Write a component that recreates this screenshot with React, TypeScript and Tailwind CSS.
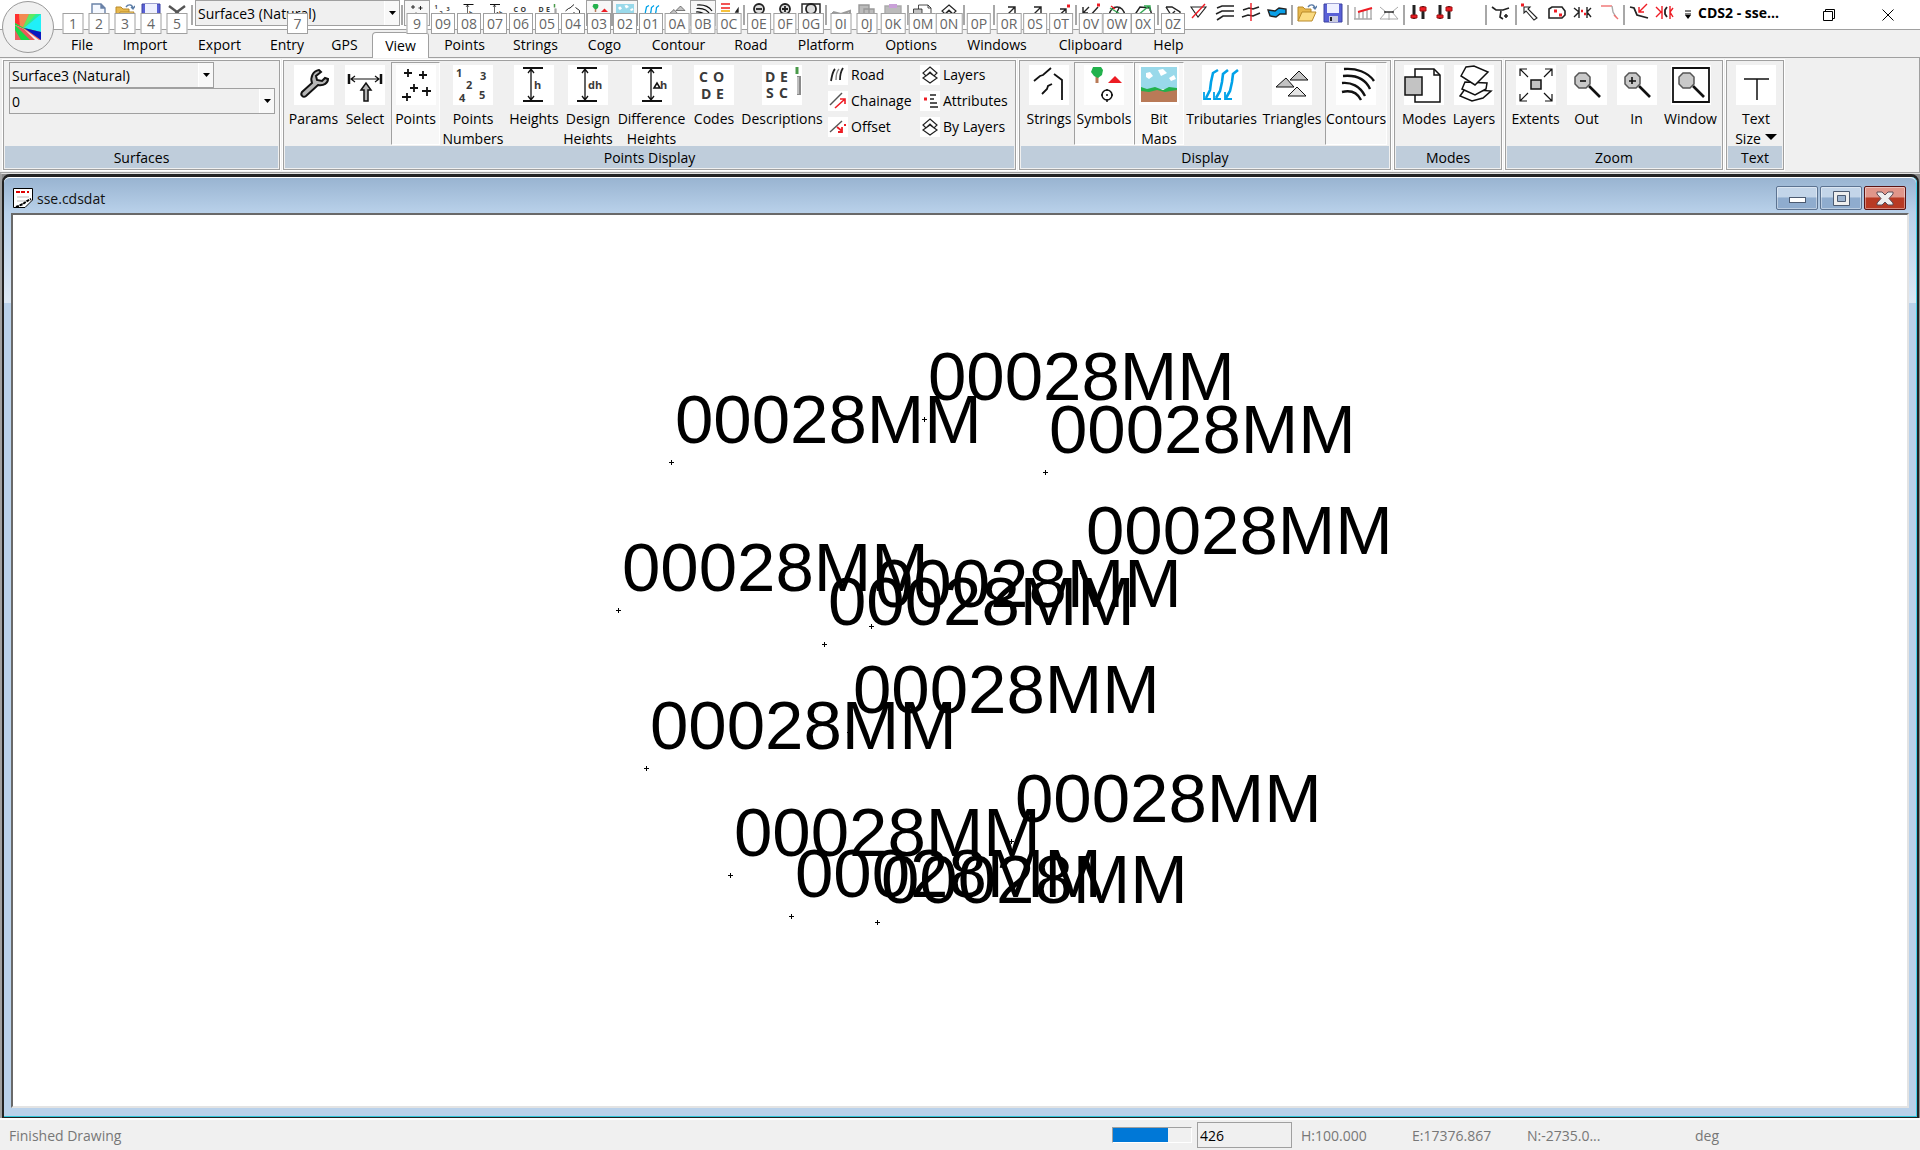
import React from 'react';

type IconProps = { className?: string };
type IconType = (props: IconProps) => React.ReactElement;

interface QuickItem {
  tip?: string;
  label: string;
  width: string;
  icon?: IconType;
  checked?: boolean;
}

interface Command {
  label: string;
  width: string;
  icon: IconType;
  checked?: boolean;
  menu?: boolean;
}

// 40 unit drawings, used by the large ribbon buttons and the quick access bar
function Svg40({ className, children }: { className?: string; children: React.ReactNode }) {
  return (
    <svg viewBox="0 0 40 40" className={className} fill="none" stroke="#111" strokeWidth="1.5" aria-hidden="true">
      {children}
    </svg>
  );
}

function Svg20({ className, children }: { className?: string; children: React.ReactNode }) {
  return (
    <svg viewBox="0 0 20 20" className={className} fill="none" stroke="#222" strokeWidth="1.4" aria-hidden="true">
      {children}
    </svg>
  );
}

function Glyph({ x, y, size = 11, children }: { x: number; y: number; size?: number; children: string }) {
  return (
    <text x={x} y={y} fontSize={size} fontWeight="700" fontFamily="Open Sans, sans-serif" fill="#3a3a3a" stroke="none">
      {children}
    </text>
  );
}

const WrenchIcon: IconType = ({ className }) => (
  <Svg40 className={className}>
    <path
      d="M8 27L18 18C16 12 19 6 25 5L27 7L22 11L23 15L28 16L31 13L34 14C34 18 30 21 24 20L12 31C9 33 6 30 8 27Z"
      fill="#b5b5b5"
      strokeWidth="2"
    />
  </Svg40>
);

const SelectIcon: IconType = ({ className }) => (
  <Svg40 className={className}>
    <path d="M4 9V19M36 9V19" strokeWidth="2.5" />
    <path d="M6 14H34M10 11L6 14L10 17M30 11L34 14L30 17" strokeWidth="1.2" />
    <path d="M16 25L21 18L26 25H23V36H19V25Z" fill="#b5b5b5" />
  </Svg40>
);

const PointsIcon: IconType = ({ className }) => (
  <Svg40 className={className}>
    <path d="M8 8H16M12 4V12M23 10H31M27 6V14M14 23H22M18 19V27M26 26H35M31 22V31M6 32H15M11 28V36" strokeWidth="1.8" />
  </Svg40>
);

const NumbersIcon: IconType = ({ className }) => (
  <Svg40 className={className}>
    <Glyph x={3} y={12}>1</Glyph>
    <Glyph x={27} y={15}>3</Glyph>
    <Glyph x={13} y={24}>2</Glyph>
    <Glyph x={6} y={37}>4</Glyph>
    <Glyph x={26} y={34}>5</Glyph>
  </Svg40>
);

function heightIcon(text: string): IconType {
  return ({ className }) => (
    <Svg40 className={className}>
      <path d="M9 3H29M9 36H29" strokeWidth="2" />
      <path d="M17 4V35M14 8L17 4L20 8M14 31L17 35L20 31" strokeWidth="1.3" />
      <Glyph x={20} y={24}>{text}</Glyph>
    </Svg40>
  );
}

const HeightsIcon = heightIcon('h');
const DesignHeightsIcon = heightIcon('dh');

const DifferenceIcon: IconType = ({ className }) => (
  <Svg40 className={className}>
    <path d="M10 3H30M10 36H30" strokeWidth="2" />
    <path d="M19 4V35M16 8L19 4L22 8M16 31L19 35L22 31" strokeWidth="1.3" />
    <path d="M22 23L25 18L28 23Z" />
    <Glyph x={28} y={24}>h</Glyph>
  </Svg40>
);

const CodesIcon: IconType = ({ className }) => (
  <Svg40 className={className}>
    <Glyph x={5} y={17} size={14}>C</Glyph>
    <Glyph x={19} y={17} size={14}>O</Glyph>
    <Glyph x={7} y={34} size={14}>D</Glyph>
    <Glyph x={22} y={34} size={14}>E</Glyph>
  </Svg40>
);

const DescriptionsIcon: IconType = ({ className }) => (
  <Svg40 className={className}>
    <Glyph x={3} y={17} size={14}>D</Glyph>
    <Glyph x={18} y={17} size={14}>E</Glyph>
    <Glyph x={4} y={33} size={14}>S</Glyph>
    <Glyph x={17} y={33} size={14}>C</Glyph>
    <path d="M35 2V9" stroke="#4a9a4a" strokeWidth="3" />
    <path d="M37 11V30" stroke="#8a8a8a" strokeWidth="4" />
    <path d="M36 12V29" stroke="#d0d0d0" />
  </Svg40>
);

const StringsIcon: IconType = ({ className }) => (
  <Svg40 className={className}>
    <path d="M5 16L11 11L14 10L22 3M25 9L33 15V35M13 29L18 24L19 21L23 19" strokeWidth="1.8" />
  </Svg40>
);

const SymbolsIcon: IconType = ({ className }) => (
  <Svg40 className={className}>
    <path d="M13 10V18" stroke="#b97a57" strokeWidth="3" />
    <path d="M9 2H17L19 5L18 10L14 13L10 11L7 7Z" fill="#22b14c" stroke="none" />
    <path d="M24 18L31 11L38 18Z" fill="#ed1c24" stroke="none" />
    <circle cx="23" cy="30" r="5" />
    <path d="M22 30H24M23 24V26M23 34V37M17 30H19M27 30H29" />
  </Svg40>
);

const BitMapsIcon: IconType = ({ className }) => (
  <Svg40 className={className}>
    <g stroke="none">
      <path d="M2 2H38V24H2Z" fill="#99d9ea" />
      <path d="M7 8L11 7L14 11L10 14L7 12ZM19 5L24 4L28 8L22 11ZM30 13L35 10L37 14L32 16Z" fill="#fff" />
      <path d="M2 22L8 24L16 22L24 25L30 22L38 23V28H2Z" fill="#22b14c" />
      <path d="M2 26L10 27L18 25L26 27L38 25V37H2Z" fill="#b97a57" />
    </g>
  </Svg40>
);

const TributariesIcon: IconType = ({ className }) => (
  <Svg40 className={className}>
    <g stroke="#00a2e8" strokeWidth="2.6">
      <path d="M16 5L11 8L9 17L8 25L4 33M26 5L21 9L20 17L18 26L14 33M36 5L31 9L30 17L28 26L24 33" />
      <path d="M2 27V34H9M12 27V34H19M23 27V34H30" strokeWidth="1.8" />
    </g>
  </Svg40>
);

const TrianglesIcon: IconType = ({ className }) => (
  <Svg40 className={className}>
    <g fill="#c3c3c3" strokeWidth="1">
      <path d="M18 15L27 6L36 15Z" />
      <path d="M4 22L14 13L22 22Z" />
      <path d="M16 31L25 22L34 31Z" fill="#e4e4e4" />
    </g>
  </Svg40>
);

const ContoursIcon: IconType = ({ className }) => (
  <Svg40 className={className}>
    <path
      d="M8 4C20 3 32 7 38 16M7 11C18 10 29 13 34 24M6 18C15 17 24 21 29 31M6 27C14 25 21 27 25 35"
      strokeWidth="2.4"
    />
  </Svg40>
);

const ModesIcon: IconType = ({ className }) => (
  <Svg40 className={className}>
    <path d="M11 4H30L36 10V37H11Z" fill="#fff" />
    <path d="M30 4V10H36" />
    <path d="M1 12H18V30H1Z" fill="#c3c3c3" />
  </Svg40>
);

const SheetsIcon: IconType = ({ className }) => (
  <Svg40 className={className}>
    <g fill="#fff">
      <path d="M6 31L11 24L37 26L29 33L18 36Z" />
      <path d="M8 24L11 17L33 18L32 24L21 30Z" />
      <path d="M7 11L12 2L20 1L34 7L21 20Z" />
    </g>
  </Svg40>
);

const ExtentsIcon: IconType = ({ className }) => (
  <Svg40 className={className}>
    <path d="M15 15H25V24H15Z" fill="#c3c3c3" />
    <path d="M12 12L4 4M4 11V4H11M28 12L36 4M29 4H36V11M12 28L4 36M4 29V36H11M28 28L36 36M36 29V36H29" strokeWidth="1.2" />
  </Svg40>
);

function zoomIcon(mark: string, framed: boolean): IconType {
  return ({ className }) => (
    <Svg40 className={className}>
      {framed && <path d="M2 3H38V37H2Z" strokeWidth="1.8" />}
      <path d="M22 21L33 32" strokeWidth="2.6" />
      <path d="M12 8H19L23 12V19L19 23H12L8 19V12Z" fill="#c9c9c9" stroke="#555" />
      <path d={mark} strokeWidth="1.6" />
    </Svg40>
  );
}

const ZoomOutIcon = zoomIcon('M13 16H19', false);
const ZoomInIcon = zoomIcon('M12 16H19M15 12V19', false);
const ZoomWindowIcon = zoomIcon('', true);

// The quick access bar draws the zoom commands as plain lenses
function lensIcon(mark: string, framed: boolean): IconType {
  return ({ className }) => (
    <Svg20 className={className}>
      {framed && <path d="M1 1H19V19H1Z" />}
      <circle cx="10" cy="6" r="5" fill="#ddd" strokeWidth="1.8" />
      <path d={mark} strokeWidth="1.8" />
    </Svg20>
  );
}

const LensOutIcon = lensIcon('M7 6H13', false);
const LensInIcon = lensIcon('M7 6H13M10 3V9', false);
const LensWindowIcon = lensIcon('', true);

const TextSizeIcon: IconType = ({ className }) => (
  <Svg40 className={className}>
    <path d="M8 14H33M21 14V35" />
  </Svg40>
);

// 20 unit drawings
const RoadIcon: IconType = ({ className }) => (
  <Svg20 className={className}>
    <path d="M3 16C4 10 5 6 7 4M12 15C12 9 13 6 15 3" strokeWidth="1.8" />
    <path d="M8 15C8 10 9 6 11 4" stroke="#888" />
  </Svg20>
);

const ChainageIcon: IconType = ({ className }) => (
  <Svg20 className={className}>
    <path d="M2 14L14 2" stroke="#555" />
    <path d="M7 17L17 8M12 8H17V13" stroke="#ee1c24" strokeWidth="1.6" />
  </Svg20>
);

const OffsetIcon: IconType = ({ className }) => (
  <Svg20 className={className}>
    <path d="M2 15L14 4" stroke="#555" />
    <path d="M9 10L14 14M10 15H14V10M16 8H18" stroke="#ee1c24" strokeWidth="1.8" />
  </Svg20>
);

const LayersIcon: IconType = ({ className }) => (
  <Svg20 className={className}>
    <path d="M10 2L17 8L14 11L10 7L6 11L3 8ZM10 8L17 13L10 18L3 13Z" strokeWidth="1.2" />
  </Svg20>
);

const AttributesIcon: IconType = ({ className }) => (
  <Svg20 className={className}>
    <path d="M4 8H7" stroke="#ee1c24" strokeWidth="3" />
    <path d="M10 4H16M10 8H14M10 12H17M10 16H18" strokeWidth="1.6" />
  </Svg20>
);

const NewIcon: IconType = ({ className }) => (
  <Svg20 className={className}>
    <path d="M3 1H12L16 5V20H3Z" fill="#f4f8ff" stroke="#6a82a8" />
    <path d="M12 1V5H16" fill="#6a82a8" stroke="#6a82a8" />
  </Svg20>
);

const OpenIcon: IconType = ({ className }) => (
  <Svg20 className={className}>
    <path d="M1 18V4H6L8 6H14V9" fill="#e7b84d" stroke="#b98a2b" strokeWidth="1" />
    <path d="M1 18L5 9H19L15 18Z" fill="#fbdc83" stroke="#b98a2b" strokeWidth="1" />
    <path d="M11 4C13 1 17 1 18 5M16 4L18 6L20 3" stroke="#5b7ca6" />
  </Svg20>
);

const SaveIcon: IconType = ({ className }) => (
  <Svg20 className={className}>
    <path d="M1 1H19V19H1Z" fill="#5960d6" stroke="#3c42a0" strokeWidth="1" />
    <path d="M4 1H16V10H4Z" fill="#eef0ff" stroke="none" />
    <path d="M6 13H15V19H6Z" fill="#c9cbe0" stroke="none" />
    <path d="M8 14V18" stroke="#222" strokeWidth="2" />
  </Svg20>
);

const CrossIcon: IconType = ({ className }) => (
  <Svg20 className={className}>
    <path d="M2 3L10 9L18 3M4 16L10 9L16 16" stroke="#555" strokeWidth="2.4" />
  </Svg20>
);

const ColourBandsIcon: IconType = ({ className }) => (
  <Svg20 className={className}>
    <path d="M2 1H11M2 5H11" stroke="#f25555" strokeWidth="2" />
    <path d="M2 8H11" stroke="#f6c13c" strokeWidth="2" />
    <path d="M2 11H11" stroke="#4cc356" strokeWidth="2" />
    <path d="M17 9L19 6V9Z" fill="#222" />
  </Svg20>
);

const GreyChartIcon: IconType = ({ className }) => (
  <Svg20 className={className}>
    <path d="M2 9V14M2 9L10 11L19 8V14" stroke="#999" strokeWidth="2" />
  </Svg20>
);

const CopyIcon: IconType = ({ className }) => (
  <Svg20 className={className}>
    <path d="M2 2H12V11H2ZM7 6H17V16H7Z" fill="#bbb" stroke="#999" />
  </Svg20>
);

const PasteIcon: IconType = ({ className }) => (
  <Svg20 className={className}>
    <path d="M2 3H18V18H2Z" fill="#bbb" stroke="#aaa" />
    <path d="M6 1H14V5H6Z" fill="#c9a0d8" stroke="none" />
  </Svg20>
);

const ArrowIcon: IconType = ({ className }) => (
  <Svg20 className={className}>
    <path d="M3 17L16 4M9 4H16V10" />
  </Svg20>
);

const ArrowDotIcon: IconType = ({ className }) => (
  <Svg20 className={className}>
    <path d="M3 17L15 6M9 6H15V11" />
    <path d="M16 3H19" stroke="#ee1c24" strokeWidth="3" />
  </Svg20>
);

const SplitIcon: IconType = ({ className }) => (
  <Svg20 className={className}>
    <path d="M2 4V10H7M2 10L8 4M8 14L17 4" />
    <path d="M16 2H19" stroke="#ee1c24" strokeWidth="3" />
  </Svg20>
);

const ArcIcon: IconType = ({ className }) => (
  <Svg20 className={className}>
    <path d="M2 13C3 1 17 1 18 13M8 13L12 5" />
    <path d="M3 5L15 12" stroke="#33a852" />
    <path d="M4 3L8 6" stroke="#ee1c24" />
  </Svg20>
);

const GreenArcIcon: IconType = ({ className }) => (
  <Svg20 className={className}>
    <path d="M1 13L7 4L17 5L19 13" />
    <path d="M5 12L16 3M11 3H17V8" stroke="#33a852" />
  </Svg20>
);

const FlagIcon: IconType = ({ className }) => (
  <Svg20 className={className}>
    <path d="M3 4H9L17 9V14M3 4L8 12L12 8" />
  </Svg20>
);

const StrikeIcon: IconType = ({ className }) => (
  <Svg20 className={className}>
    <path d="M2 4L17 4L9 14Z" strokeWidth="1.1" />
    <path d="M3 15L16 1" stroke="#ee1c24" />
  </Svg20>
);

const WavesIcon: IconType = ({ className }) => (
  <Svg20 className={className}>
    <path d="M2 5L7 3H19M1 11L7 8H19M2 17L8 13H19" strokeWidth="1.6" />
  </Svg20>
);

const CrossWavesIcon: IconType = ({ className }) => (
  <Svg20 className={className}>
    <path d="M2 7L8 5L12 6L18 4M1 14L7 12L12 13L19 10" strokeWidth="1.6" />
    <path d="M10 0V18" stroke="#ee1c24" />
  </Svg20>
);

const PondIcon: IconType = ({ className }) => (
  <Svg20 className={className}>
    <path d="M1 7L8 8L12 5L19 6V11L13 11L9 14L3 13Z" fill="#0aa0e8" />
  </Svg20>
);

const ProfileIcon: IconType = ({ className }) => (
  <Svg20 className={className}>
    <path d="M2 4V16M6 9V16M10 8V16M14 7V16M18 5V16M1 16H19" stroke="#aaa" />
    <path d="M5 9L12 7L19 5" stroke="#ee1c24" strokeWidth="2" />
  </Svg20>
);

const SectionIcon: IconType = ({ className }) => (
  <Svg20 className={className}>
    <path d="M1 4L7 9L1 16M19 4L13 9L19 16M10 9V17M1 16H19" stroke="#aaa" strokeWidth="1" />
    <path d="M5 9H15" />
  </Svg20>
);

const SliderIcon: IconType = ({ className }) => (
  <Svg20 className={className}>
    <path d="M5 2V16M14 3V16" strokeWidth="3" />
    <path d="M2 12H8V15H2ZM11 4H17V8H11Z" fill="#ee1c24" stroke="#a01010" strokeWidth="1" />
  </Svg20>
);

const BranchIcon: IconType = ({ className }) => (
  <Svg20 className={className}>
    <path d="M1 4L5 7H12L18 5M10 8L9 14L12 16M15 11V15M13 13H17" strokeWidth="1.6" />
  </Svg20>
);

const PickIcon: IconType = ({ className }) => (
  <Svg20 className={className}>
    <path d="M3 4L9 4L7 6L16 15L13 17L5 8L3 10Z" strokeWidth="1.1" />
    <path d="M0 2H3" stroke="#ee1c24" strokeWidth="3" />
  </Svg20>
);

const LoopIcon: IconType = ({ className }) => (
  <Svg20 className={className}>
    <path d="M2 15V6L5 4H15L18 8V12L15 15Z" strokeWidth="1.6" />
    <path d="M7 8H10M12 12H15" stroke="#ee1c24" strokeWidth="3" />
  </Svg20>
);

const JoinIcon: IconType = ({ className }) => (
  <Svg20 className={className}>
    <path d="M1 5L6 9L1 14M6 4V15M18 5L14 9L18 14M14 4V15" />
    <path d="M8 8H10M11 11H13" stroke="#ee1c24" strokeWidth="2.4" />
  </Svg20>
);

const CurveIcon: IconType = ({ className }) => (
  <Svg20 className={className}>
    <path d="M2 3H13" stroke="#f07070" />
    <path d="M13 3L14 9L17 14" stroke="#aaa" />
    <path d="M15 12L19 16" stroke="#f07070" />
  </Svg20>
);

const TrimIcon: IconType = ({ className }) => (
  <Svg20 className={className}>
    <path d="M1 4L5 5L8 12L19 15" strokeWidth="1.8" />
    <path d="M18 1L10 9M10 4V9H15" stroke="#ee1c24" />
  </Svg20>
);

const MirrorIcon: IconType = ({ className }) => (
  <Svg20 className={className}>
    <path d="M1 4L6 9L1 14M7 3V16M18 5L15 9L18 14M15 3V16" stroke="#ee1c24" />
    <path d="M12 4L10 7V11L12 14" strokeWidth="1.8" />
  </Svg20>
);

const quickFile: QuickItem[] = [
  { tip: '1', label: 'Application menu', width: 'w-[26px]' },
  { tip: '2', label: 'New', width: 'w-[26px]', icon: NewIcon },
  { tip: '3', label: 'Open', width: 'w-[26px]', icon: OpenIcon },
  { tip: '4', label: 'Save', width: 'w-[26px]', icon: SaveIcon },
  { tip: '5', label: 'Close', width: 'w-[26px]', icon: CrossIcon },
];

const quickGroups: QuickItem[][] = [
  [
    { tip: '9', label: 'Points', width: 'w-[26px]', icon: PointsIcon, checked: true },
    { tip: '09', label: 'Point numbers', width: 'w-[26px]', icon: NumbersIcon },
    { tip: '08', label: 'Heights', width: 'w-[26px]', icon: HeightsIcon },
    { tip: '07', label: 'Difference heights', width: 'w-[26px]', icon: DifferenceIcon },
    { tip: '06', label: 'Codes', width: 'w-[26px]', icon: CodesIcon },
    { tip: '05', label: 'Descriptions', width: 'w-[26px]', icon: DescriptionsIcon },
    { tip: '04', label: 'Strings', width: 'w-[26px]', icon: StringsIcon },
    { tip: '03', label: 'Symbols', width: 'w-[26px]', icon: SymbolsIcon, checked: true },
    { tip: '02', label: 'Bit maps', width: 'w-[26px]', icon: BitMapsIcon, checked: true },
    { tip: '01', label: 'Tributaries', width: 'w-[26px]', icon: TributariesIcon },
    { tip: '0A', label: 'Triangles', width: 'w-[26px]', icon: TrianglesIcon },
    { tip: '0B', label: 'Contours', width: 'w-[26px]', icon: ContoursIcon, checked: true },
    { tip: '0C', label: 'Colour bands', width: 'w-[26px]', icon: ColourBandsIcon },
  ],
  [
    { tip: '0E', label: 'Zoom out', width: 'w-[26px]', icon: LensOutIcon },
    { tip: '0F', label: 'Zoom in', width: 'w-[26px]', icon: LensInIcon },
    { tip: '0G', label: 'Zoom window', width: 'w-[26px]', icon: LensWindowIcon },
  ],
  [
    { tip: '0I', label: 'Cut', width: 'w-[26px]', icon: GreyChartIcon },
    { tip: '0J', label: 'Copy', width: 'w-[26px]', icon: CopyIcon },
    { tip: '0K', label: 'Paste', width: 'w-[26px]', icon: PasteIcon },
  ],
  [
    { tip: '0M', label: 'Modes', width: 'w-[26px]', icon: ModesIcon },
    { tip: '0N', label: 'Layers', width: 'w-[26px]', icon: LayersIcon },
  ],
  [{ tip: '0P', label: 'Text', width: 'w-[26px]' }],
  [
    { tip: '0R', label: 'Line', width: 'w-[26px]', icon: ArrowIcon },
    { tip: '0S', label: 'Line by points', width: 'w-[26px]', icon: ArrowIcon },
    { tip: '0T', label: 'Line to point', width: 'w-[26px]', icon: ArrowDotIcon },
  ],
  [
    { tip: '0V', label: 'Split', width: 'w-[26px]', icon: SplitIcon },
    { tip: '0W', label: 'Arc', width: 'w-[26px]', icon: ArcIcon },
    { tip: '0X', label: 'Arc by points', width: 'w-[26px]', icon: GreenArcIcon },
  ],
  [
    { tip: '0Z', label: 'Polygon', width: 'w-[26px]', icon: FlagIcon },
    { label: 'Delete triangle', width: 'w-[26px]', icon: StrikeIcon },
    { label: 'Make contours', width: 'w-[26px]', icon: WavesIcon },
    { label: 'Break line', width: 'w-[26px]', icon: CrossWavesIcon },
    { label: 'Flood', width: 'w-[26px]', icon: PondIcon },
  ],
  [
    { label: 'Open road', width: 'w-[26px]', icon: OpenIcon },
    { label: 'Save road', width: 'w-[26px]', icon: SaveIcon },
  ],
  [
    { label: 'Long section', width: 'w-[26px]', icon: ProfileIcon },
    { label: 'Cross section', width: 'w-[26px]', icon: SectionIcon },
  ],
  [
    { label: 'Levels down', width: 'w-[26px]', icon: SliderIcon },
    { label: 'Levels up', width: 'w-[26px]', icon: SliderIcon },
    { label: 'Spare', width: 'w-[26px]' },
  ],
  [{ label: 'Branch', width: 'w-[26px]', icon: BranchIcon }],
  [
    { label: 'Pick', width: 'w-[26px]', icon: PickIcon },
    { label: 'Loop', width: 'w-[26px]', icon: LoopIcon },
    { label: 'Join', width: 'w-[26px]', icon: JoinIcon },
    { label: 'Curve', width: 'w-[26px]', icon: CurveIcon },
  ],
  [
    { label: 'Trim', width: 'w-[26px]', icon: TrimIcon },
    { label: 'Mirror', width: 'w-[26px]', icon: MirrorIcon },
  ],
];

const tabs = [
  { label: 'File', width: 'w-[52px]' },
  { label: 'Import', width: 'w-[74px]' },
  { label: 'Export', width: 'w-[75px]' },
  { label: 'Entry', width: 'w-[60px]' },
  { label: 'GPS', width: 'w-[55px]' },
  { label: 'View', width: 'w-[57px]' },
  { label: 'Points', width: 'w-[71px]' },
  { label: 'Strings', width: 'w-[71px]' },
  { label: 'Cogo', width: 'w-[67px]' },
  { label: 'Contour', width: 'w-[81px]' },
  { label: 'Road', width: 'w-[64px]' },
  { label: 'Platform', width: 'w-[86px]' },
  { label: 'Options', width: 'w-[84px]' },
  { label: 'Windows', width: 'w-[88px]' },
  { label: 'Clipboard', width: 'w-[99px]' },
  { label: 'Help', width: 'w-[57px]' },
];

const pointCommands: Command[] = [
  { label: 'Params', width: 'w-[51px]', icon: WrenchIcon },
  { label: 'Select', width: 'w-[52px]', icon: SelectIcon },
  { label: 'Points', width: 'w-[49px]', icon: PointsIcon, checked: true },
  { label: 'Points Numbers', width: 'w-[66px]', icon: NumbersIcon },
  { label: 'Heights', width: 'w-[56px]', icon: HeightsIcon },
  { label: 'Design Heights', width: 'w-[52px]', icon: DesignHeightsIcon },
  { label: 'Difference Heights', width: 'w-[75px]', icon: DifferenceIcon },
  { label: 'Codes', width: 'w-[50px]', icon: CodesIcon },
  { label: 'Descriptions', width: 'w-[86px]', icon: DescriptionsIcon },
];

const smallCommands = [
  [
    { label: 'Road', icon: RoadIcon },
    { label: 'Chainage', icon: ChainageIcon },
    { label: 'Offset', icon: OffsetIcon },
  ],
  [
    { label: 'Layers', icon: LayersIcon },
    { label: 'Attributes', icon: AttributesIcon },
    { label: 'By Layers', icon: LayersIcon },
  ],
];

const displayCommands: Command[] = [
  { label: 'Strings', width: 'w-[50px]', icon: StringsIcon },
  { label: 'Symbols', width: 'w-[60px]', icon: SymbolsIcon, checked: true },
  { label: 'Bit Maps', width: 'w-[50px]', icon: BitMapsIcon, checked: true },
  { label: 'Tributaries', width: 'w-[75px]', icon: TributariesIcon },
  { label: 'Triangles', width: 'w-[66px]', icon: TrianglesIcon },
  { label: 'Contours', width: 'w-[62px]', icon: ContoursIcon, checked: true },
];

const modeCommands: Command[] = [
  { label: 'Modes', width: 'w-[50px]', icon: ModesIcon },
  { label: 'Layers', width: 'w-[50px]', icon: SheetsIcon },
];

const zoomCommands: Command[] = [
  { label: 'Extents', width: 'w-[51px]', icon: ExtentsIcon },
  { label: 'Out', width: 'w-[51px]', icon: ZoomOutIcon },
  { label: 'In', width: 'w-[49px]', icon: ZoomInIcon },
  { label: 'Window', width: 'w-[59px]', icon: ZoomWindowIcon },
];

const textCommands: Command[] = [{ label: 'Text Size', width: 'w-[50px]', icon: TextSizeIcon, menu: true }];

// Survey points in drawing coordinates
const surveyPoints = [
  { x: 658, y: 247 },
  { x: 911, y: 204 },
  { x: 1032, y: 257 },
  { x: 1069, y: 358 },
  { x: 605, y: 395 },
  { x: 858, y: 411 },
  { x: 811, y: 429 },
  { x: 836, y: 517 },
  { x: 633, y: 553 },
  { x: 998, y: 626 },
  { x: 717, y: 660 },
  { x: 778, y: 701 },
  { x: 864, y: 707 },
];

function QuickButton({ item }: { item: QuickItem }) {
  const Icon = item.icon;
  return (
    <button
      type="button"
      aria-label={item.label}
      className={`relative flex h-[26px] shrink-0 justify-center border pt-[2px] ${item.width} ${
        item.checked ? 'border-[#a0a0a0] bg-[#f7f7f7]' : 'border-transparent'
      }`}
    >
      {Icon && <Icon className="h-5 w-5 shrink-0" />}
      {item.tip && (
        <span className="absolute top-3 left-1/2 z-10 flex h-[21px] min-w-[21px] -translate-x-1/2 items-center justify-center border border-[#a0a0a0] bg-white px-[3px] text-sm text-[#666]">
          {item.tip}
        </span>
      )}
    </button>
  );
}

function Divider() {
  return <span className="mx-px h-5 w-[2px] shrink-0 self-center bg-[#a8a8a8]" />;
}

function Combo({ label, value, className }: { label: string; value: string; className: string }) {
  return (
    <div className={`relative h-[26px] border border-[#a0a0a0] bg-[#f0f0f0] ${className}`}>
      <select aria-label={label} defaultValue={value} className="h-full w-full appearance-none bg-transparent pt-px pl-[2px] outline-none">
        <option>{value}</option>
      </select>
      <span className="pointer-events-none absolute inset-y-0 right-0 flex w-[15px] items-center justify-center border-l border-white bg-white/50">
        <svg viewBox="0 0 7 4" className="h-1 w-[7px]" aria-hidden="true">
          <path d="M0 0H7L3.5 4Z" fill="#000" />
        </svg>
      </span>
    </div>
  );
}

function CommandButton({ command }: { command: Command }) {
  const Icon = command.icon;
  return (
    <button
      type="button"
      className={`flex h-[83px] shrink-0 flex-col items-center overflow-hidden border pt-[2px] ${command.width} ${
        command.checked ? 'border-t-[#a0a0a0] border-r-white border-b-white border-l-[#a0a0a0] bg-[#f7f7f7]' : 'border-transparent'
      }`}
    >
      <Icon className="h-10 w-10 shrink-0 bg-white" />
      <span className="mt-1 flex flex-col items-center leading-5 whitespace-nowrap">
        {command.label.split(' ').map((word, index) => (
          <span key={index} className="flex items-center">
            {word}
            {command.menu && index === 1 && (
              <svg viewBox="0 0 12 6" className="mb-1 ml-1 h-[6px] w-3" aria-hidden="true">
                <path d="M0 0H12L6 6Z" fill="#000" />
              </svg>
            )}
          </span>
        ))}
      </span>
    </button>
  );
}

function RibbonGroup({ title, width, children }: { title: string; width: string; children: React.ReactNode }) {
  return (
    <section className={`flex h-[110px] shrink-0 flex-col border border-[#a0a0a0] p-px ring-1 ring-white ${width}`}>
      <div className="flex h-[84px] shrink-0 px-[3px]">{children}</div>
      <h2 className="flex h-[22px] shrink-0 items-center justify-center bg-[#bfcddb] pt-px">{title}</h2>
    </section>
  );
}

function AppLogo() {
  return (
    <button
      type="button"
      aria-label="CDS menu"
      className="absolute top-px left-[2px] z-20 flex h-[52px] w-[52px] items-center justify-center rounded-full border border-[#9a9a9a] bg-[#f0f0f0]"
    >
      <svg viewBox="0 0 26 26" className="h-[26px] w-[26px]" aria-hidden="true">
        <path d="M0 0H26V26H0Z" fill="#f0685c" />
        <path d="M0 0H4L5 12L0 9Z" fill="#ff3030" />
        <path d="M4 0H14L8 13L5 12Z" fill="#f28a50" />
        <path d="M14 0H26L9 14L8 13Z" fill="#60e860" />
        <path d="M21 0H26L9 14Z" fill="#20f0a0" />
        <path d="M26 0V18L9 14Z" fill="#20f0f8" />
        <path d="M0 9L9 14L26 18L9 15L0 11Z" fill="#10e040" />
        <path d="M9 14L26 18V26Z" fill="#0818c0" />
        <path d="M0 11L9 15L24 26H0Z" fill="#f0f0f0" />
        <path d="M0 11L9 15L20 26H12Z" fill="#e85858" />
        <path d="M0 11L15 26H0Z" fill="#18d848" />
        <path d="M0 16L6 26H0Z" fill="#e86060" />
      </svg>
    </button>
  );
}

function TitleBar() {
  return (
    <header className="flex h-[30px] border-b border-[#a0a0a0] bg-white pl-[60px]">
      {quickFile.map((item) => (
        <QuickButton key={item.label} item={item} />
      ))}
      <Divider />
      <div className="relative ml-px">
        <Combo label="Active surface" value="Surface3 (Natural)" className="w-[205px]" />
        <span className="absolute top-[13px] left-[92px] flex h-[21px] w-[21px] items-center justify-center border border-[#a0a0a0] bg-white text-sm text-[#666]">
          7
        </span>
      </div>
      {quickGroups.map((group, index) => (
        <React.Fragment key={index}>
          <Divider />
          {group.map((item) => (
            <QuickButton key={item.label} item={item} />
          ))}
        </React.Fragment>
      ))}
      <button type="button" aria-label="Customize" className="ml-[6px] flex w-[8px] items-center">
        <svg viewBox="0 0 8 10" className="h-[10px] w-2" aria-hidden="true">
          <path d="M1 1H7M1 4H7" stroke="#000" />
          <path d="M1 5H7L4 9Z" fill="#000" />
        </svg>
      </button>
      <h1 className="ml-[6px] min-w-0 flex-1 pt-[3px] text-sm leading-5 font-bold whitespace-nowrap">CDS2 - sse...</h1>
      <button type="button" aria-label="Restore" className="flex w-[58px] shrink-0 items-center justify-center">
        <svg viewBox="0 0 12 12" className="h-3 w-3" fill="none" stroke="#000" aria-hidden="true">
          <path d="M0.5 2.5H9.5V11.5H0.5ZM2.5 2.5V0.5H11.5V9.5H9.5" />
        </svg>
      </button>
      <button type="button" aria-label="Close" className="mr-[2px] flex w-[60px] shrink-0 items-center justify-center">
        <svg viewBox="0 0 12 12" className="h-3 w-3" fill="none" stroke="#000" aria-hidden="true">
          <path d="M0.5 0.5L11.5 11.5M11.5 0.5L0.5 11.5" />
        </svg>
      </button>
    </header>
  );
}

function Ribbon() {
  return (
    <>
      <nav className="flex h-7 items-end border-b border-[#a0a0a0] pl-14">
        {tabs.map((tab) => (
          <button
            key={tab.label}
            type="button"
            className={`h-[25px] shrink-0 ${tab.width} ${
              tab.label === 'View' ? '-mb-px h-[26px] rounded-t border border-b-0 border-[#a0a0a0] bg-white' : ''
            }`}
          >
            {tab.label}
          </button>
        ))}
      </nav>
      <div className="flex h-[115px] gap-[3px] border-r border-b border-[#a0a0a0] pt-[2px] pl-[3px]">
        <RibbonGroup title="Surfaces" width="w-[277px]">
          <div className="flex flex-col pl-px">
            <Combo label="Surface" value="Surface3 (Natural)" className="w-[205px]" />
            <Combo label="Surface number" value="0" className="w-[266px]" />
          </div>
        </RibbonGroup>
        <RibbonGroup title="Points Display" width="w-[733px]">
          {pointCommands.map((command) => (
            <CommandButton key={command.label} command={command} />
          ))}
          <div className="ml-[3px] flex">
            {smallCommands.map((column, index) => (
              <div key={index} className="flex w-[92px] flex-col">
                {column.map(({ label, icon: Icon }) => (
                  <button key={label} type="button" className="flex h-[26px] items-center gap-[3px] whitespace-nowrap">
                    <Icon className="h-5 w-5 shrink-0 bg-white" />
                    {label}
                  </button>
                ))}
              </div>
            ))}
          </div>
        </RibbonGroup>
        <RibbonGroup title="Display" width="w-[372px]">
          {displayCommands.map((command) => (
            <CommandButton key={command.label} command={command} />
          ))}
        </RibbonGroup>
        <RibbonGroup title="Modes" width="w-[108px]">
          {modeCommands.map((command) => (
            <CommandButton key={command.label} command={command} />
          ))}
        </RibbonGroup>
        <RibbonGroup title="Zoom" width="w-[218px]">
          {zoomCommands.map((command) => (
            <CommandButton key={command.label} command={command} />
          ))}
        </RibbonGroup>
        <RibbonGroup title="Text" width="w-[58px]">
          {textCommands.map((command) => (
            <CommandButton key={command.label} command={command} />
          ))}
        </RibbonGroup>
      </div>
    </>
  );
}

function DrawingWindow() {
  return (
    <div className="flex flex-1 border-t border-l-2 border-t-[#e0e0e0] border-l-[#a0a0a0] bg-[#8a8a8a] pr-px">
      <main className="flex flex-1 flex-col rounded-t-lg border-x-2 border-t-[3px] border-b border-[#222] bg-[#b9d1ea]">
        <div className="flex flex-1 flex-col rounded-t-md border-r border-b border-r-[#3fd0e8] border-b-[#2fc4d8]">
          <div className="flex h-9 items-center rounded-t-md border-t border-white bg-linear-to-b from-[#99b4d1] to-[#b9d1ea] pt-[5px] pr-[10px] pl-[9px]">
            <svg viewBox="0 0 20 20" className="h-5 w-5" aria-hidden="true">
              <path d="M0.5 0.5H19.5V12L12 19.5H0.5Z" fill="#fff" stroke="#000" />
              <path d="M4 3V5M6 3V5M9 3V5M11 3V5M15 3V5" stroke="#e00000" strokeWidth="2" />
              <path d="M4 9H16M4 13H13" stroke="#bbb" />
              <path d="M3 19L10 16L14 13L18 11" stroke="#000" strokeWidth="2" strokeDasharray="3 1" />
            </svg>
            <h2 className="ml-1 flex-1 pt-px leading-5 text-[#111]">sse.cdsdat</h2>
            <div className="flex gap-[2px]">
              <button
                type="button"
                aria-label="Minimize drawing"
                className="flex h-6 w-[42px] items-center justify-center rounded-xs border border-[#5c7391] bg-linear-to-b from-[#c3d5e9] from-45% to-[#8facce] to-50% ring-1 ring-white/40 ring-inset"
              >
                <span className="mt-[3px] h-[6px] w-[17px] border border-[#4c5a70] bg-white" />
              </button>
              <button
                type="button"
                aria-label="Restore drawing"
                className="flex h-6 w-[42px] items-center justify-center rounded-xs border border-[#5c7391] bg-linear-to-b from-[#c3d5e9] from-45% to-[#8facce] to-50% ring-1 ring-white/40 ring-inset"
              >
                <svg viewBox="0 0 17 15" className="h-[15px] w-[17px]" aria-hidden="true">
                  <path d="M0.5 0.5H16.5V14.5H0.5Z" fill="#eee" stroke="#4c5a70" />
                  <path d="M4.5 4.5H12.5V10.5H4.5Z" fill="#9db4d0" stroke="#4c5a70" />
                </svg>
              </button>
              <button
                type="button"
                aria-label="Close drawing"
                className="flex h-6 w-[42px] items-center justify-center rounded-xs border border-[#5a1414] bg-linear-to-b from-[#e0968a] from-45% to-[#b83a24] to-50% ring-1 ring-white/40 ring-inset"
              >
                <svg viewBox="0 0 18 15" className="h-[15px] w-[18px]" aria-hidden="true">
                  <path
                    d="M1 1H6L9 4L12 1H17V3L13 7.5L17 12V14H12L9 11L6 14H1V12L5 7.5L1 3Z"
                    fill="#eee"
                    stroke="#5a4a55"
                  />
                </svg>
              </button>
            </div>
          </div>
          <div className="flex flex-1 bg-linear-to-b from-[#b9d1ea] to-[#dce8f5] bg-[length:100%_90px] bg-no-repeat px-[7px] pb-2">
            <div className="relative flex-1 overflow-hidden border-2 border-t-[#696969] border-r-[#e3e3e3] border-b-[#e3e3e3] border-l-[#696969] bg-white font-['Liberation_Sans',Arial,sans-serif]">
              {surveyPoints.map((point, index) => (
                <div key={index} className="absolute text-black" style={{ left: point.x, top: point.y }}>
                  <svg viewBox="0 0 5 5" className="absolute -top-[2px] -left-[2px] h-[5px] w-[5px]" aria-hidden="true">
                    <path d="M0 2.5H5M2.5 0V5" stroke="#000" />
                  </svg>
                  <span className="absolute bottom-2 left-1 text-[69px] leading-[69px]">00028MM</span>
                </div>
              ))}
            </div>
          </div>
        </div>
      </main>
    </div>
  );
}

function StatusBar() {
  return (
    <footer className="flex h-8 shrink-0 items-center border-t-2 border-white pl-[9px] text-[#777]">
      <span className="flex-1 pt-px">Finished Drawing</span>
      <div
        role="progressbar"
        aria-label="Drawing progress"
        aria-valuenow={71}
        className="mr-[5px] h-4 w-20 border border-t-[#a0a0a0] border-r-white border-b-white border-l-[#a0a0a0]"
      >
        <div className="h-full w-[71%] bg-[#0078d7]" />
      </div>
      <input
        aria-label="Point number"
        defaultValue="426"
        className="mr-[9px] h-[26px] w-[95px] border border-[#a0a0a0] bg-[#f0f0f0] px-[2px] text-sm text-black outline-none"
      />
      <span className="w-[111px] pt-px">H:100.000</span>
      <span className="w-[115px] pt-px">E:17376.867</span>
      <span className="w-[168px] pt-px">N:-2735.0...</span>
      <span className="w-[225px] pt-px">deg</span>
    </footer>
  );
}

export default function App() {
  return (
    <div className="relative flex min-h-screen flex-col overflow-hidden bg-[#f0f0f0] font-['Open_Sans','Noto_Sans',sans-serif] text-sm text-black">
      <AppLogo />
      <TitleBar />
      <Ribbon />
      <DrawingWindow />
      <StatusBar />
    </div>
  );
}
